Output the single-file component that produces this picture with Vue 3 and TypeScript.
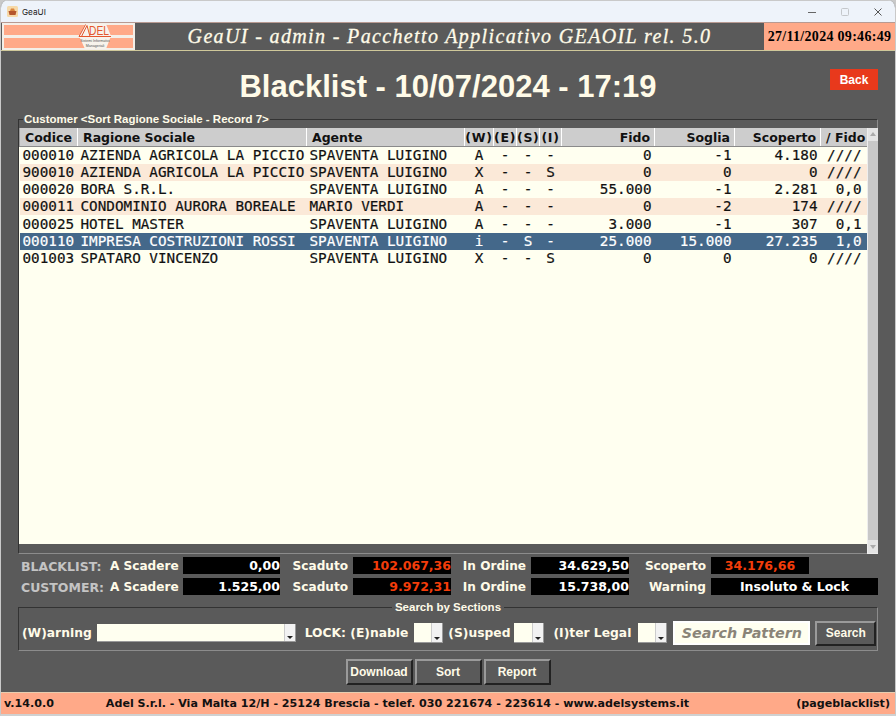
<script setup lang="ts">
interface Row {
  code: string;
  name: string;
  agent: string;
  w: string;
  e: string;
  s: string;
  i: string;
  fido: string;
  soglia: string;
  scoperto: string;
  ratio: string;
  selected?: boolean;
}

const rows: Row[] = [
  { code: '000010', name: 'AZIENDA AGRICOLA LA PICCIO', agent: 'SPAVENTA LUIGINO', w: 'A', e: '-', s: '-', i: '-', fido: '0', soglia: '-1', scoperto: '4.180', ratio: '////' },
  { code: '900010', name: 'AZIENDA AGRICOLA LA PICCIO', agent: 'SPAVENTA LUIGINO', w: 'X', e: '-', s: '-', i: 'S', fido: '0', soglia: '0', scoperto: '0', ratio: '////' },
  { code: '000020', name: 'BORA S.R.L.', agent: 'SPAVENTA LUIGINO', w: 'A', e: '-', s: '-', i: '-', fido: '55.000', soglia: '-1', scoperto: '2.281', ratio: '0,0' },
  { code: '000011', name: 'CONDOMINIO AURORA BOREALE', agent: 'MARIO VERDI', w: 'A', e: '-', s: '-', i: '-', fido: '0', soglia: '-2', scoperto: '174', ratio: '////' },
  { code: '000025', name: 'HOTEL MASTER', agent: 'SPAVENTA LUIGINO', w: 'A', e: '-', s: '-', i: '-', fido: '3.000', soglia: '-1', scoperto: '307', ratio: '0,1' },
  { code: '000110', name: 'IMPRESA COSTRUZIONI ROSSI', agent: 'SPAVENTA LUIGINO', w: 'i', e: '-', s: 'S', i: '-', fido: '25.000', soglia: '15.000', scoperto: '27.235', ratio: '1,0', selected: true },
  { code: '001003', name: 'SPATARO VINCENZO', agent: 'SPAVENTA LUIGINO', w: 'X', e: '-', s: '-', i: 'S', fido: '0', soglia: '0', scoperto: '0', ratio: '////' },
];
</script>

<template>
  <div class="window">
    <div class="titlebar">
      <svg class="app-icon" width="11" height="11" viewBox="0 0 11 11">
        <rect width="11" height="11" rx="1.5" fill="#f6d9a8" />
        <path d="M1.5 5h8l-1 4h-6z" fill="#b5562c" />
        <path d="M3 5l1-2.500h3L8 5z" fill="#d9863f" />
      </svg>
      <span class="app-name">GeaUI</span>
      <div class="win-controls">
        <svg width="12" height="12" viewBox="0 0 12 12"><path d="M2 6.500h8" stroke="#666" fill="none" /></svg>
        <svg width="12" height="12" viewBox="0 0 12 12"><rect x="2.500" y="2.500" width="7" height="7" rx="1" stroke="#c4c7cb" fill="none" /></svg>
        <svg width="12" height="12" viewBox="0 0 12 12"><path d="M2.500 2.500l7 7M9.500 2.500l-7 7" stroke="#555" fill="none" /></svg>
      </div>
    </div>

    <header class="topbar">
      <svg class="logo" width="133" height="27" viewBox="0 0 133 27">
        <rect width="133" height="27" fill="#f4efe8" />
        <rect x="2" y="2" width="129" height="10" fill="#ffa988" />
        <rect x="2" y="15" width="129" height="10" fill="#ffa988" />
        <path d="M77 13L83 1h21l5 12-5 13H83z" fill="#f7f3ec" />
        <path d="M77 13.500L83.500 1.500M79.500 13.500L85 2.500L88 13.500M77 13.500h32" stroke="#e4572e" stroke-width="1" fill="none" />
        <text x="87" y="12" textLength="20" lengthAdjust="spacingAndGlyphs" class="logo-word">DEL</text>
        <text x="93" y="18.500" text-anchor="middle" class="logo-small">Sistemi Informativi</text>
        <text x="93" y="24" text-anchor="middle" class="logo-small">Manageriali</text>
      </svg>
      <div class="app-title">GeaUI - admin - Pacchetto Applicativo GEAOIL rel. 5.0</div>
      <div class="clock">27/11/2024 09:46:49</div>
    </header>

    <main class="content">
      <div class="page-head">
        <h1>Blacklist - 10/07/2024 - 17:19</h1>
        <button class="back">Back</button>
      </div>

      <fieldset class="list-box">
        <legend>Customer &lt;Sort Ragione Sociale - Record 7&gt;</legend>
        <div class="list-inner">
          <div class="table-wrap">
            <table>
              <colgroup>
                <col style="width: 58px" />
                <col style="width: 229px" />
                <col style="width: 158px" />
                <col style="width: 29px" />
                <col style="width: 23px" />
                <col style="width: 23px" />
                <col style="width: 22px" />
                <col style="width: 93px" />
                <col style="width: 80px" />
                <col style="width: 86px" />
                <col style="width: 47px" />
              </colgroup>
              <thead>
                <tr>
                  <th>Codice</th>
                  <th>Ragione Sociale</th>
                  <th>Agente</th>
                  <th class="c">(W)</th>
                  <th class="c">(E)</th>
                  <th class="c">(S)</th>
                  <th class="c">(I)</th>
                  <th class="r">Fido</th>
                  <th class="r">Soglia</th>
                  <th class="r">Scoperto</th>
                  <th class="r">/ Fido</th>
                </tr>
              </thead>
              <tbody>
                <tr v-for="row in rows" :key="row.code" :class="{ selected: row.selected }">
                  <td>{{ row.code }}</td>
                  <td>{{ row.name }}</td>
                  <td>{{ row.agent }}</td>
                  <td class="c">{{ row.w }}</td>
                  <td class="c">{{ row.e }}</td>
                  <td class="c">{{ row.s }}</td>
                  <td class="c">{{ row.i }}</td>
                  <td class="r">{{ row.fido }}</td>
                  <td class="r">{{ row.soglia }}</td>
                  <td class="r">{{ row.scoperto }}</td>
                  <td class="r">{{ row.ratio }}</td>
                </tr>
              </tbody>
            </table>
          </div>
          <div class="scrollbar">
            <span class="up"></span>
            <span class="thumb"></span>
            <span class="down"></span>
          </div>
        </div>
      </fieldset>

      <div class="totals">
        <span class="group">BLACKLIST:</span>
        <span class="lbl first">A Scadere</span>
        <span class="val">0,00</span>
        <span class="lbl">Scaduto</span>
        <span class="val red">102.067,36</span>
        <span class="lbl">In Ordine</span>
        <span class="val">34.629,50</span>
        <span class="lbl">Scoperto</span>
        <span class="val red center">34.176,66</span>
        <span></span>

        <span class="group">CUSTOMER:</span>
        <span class="lbl first">A Scadere</span>
        <span class="val">1.525,00</span>
        <span class="lbl">Scaduto</span>
        <span class="val red">9.972,31</span>
        <span class="lbl">In Ordine</span>
        <span class="val">15.738,00</span>
        <span class="lbl">Warning</span>
        <span class="val center wide">Insoluto &amp; Lock</span>
      </div>

      <fieldset class="search-box">
        <legend>Search by Sections</legend>
        <div class="search-row">
          <span class="lbl">(W)arning</span>
          <span class="combo combo-w"><i></i></span>
          <span class="lbl lock">LOCK: (E)nable</span>
          <span class="combo combo-s"><i></i></span>
          <span class="lbl susp">(S)usped</span>
          <span class="combo combo-s wider"><i></i></span>
          <span class="lbl iter">(I)ter Legal</span>
          <span class="combo combo-s last"><i></i></span>
          <span class="pattern">Search Pattern</span>
          <button class="btn search">Search</button>
        </div>
      </fieldset>

      <div class="actions">
        <button class="btn">Download</button>
        <button class="btn">Sort</button>
        <button class="btn">Report</button>
      </div>
    </main>

    <footer class="status">
      <span>v.14.0.0</span>
      <span class="addr">Adel S.r.l. - Via Malta 12/H - 25124 Brescia - telef. 030 221674 - 223614 - www.adelsystems.it</span>
      <span>(pageblacklist)</span>
    </footer>
  </div>
</template>

<style scoped>
.window {
  width: 896px;
  height: 716px;
  box-sizing: border-box;
  display: flex;
  flex-direction: column;
  background: #5a5a5a;
  border: 1px solid #c9c9c9;
  border-top: none;
  border-bottom: 2px solid #d0d0d0;
  border-radius: 8px 8px 0 0;
  overflow: hidden;
  font-family: "DejaVu Sans", sans-serif;
}

.titlebar {
  height: 22px;
  flex: none;
  display: flex;
  align-items: center;
  background: #eef3fa;
  padding-left: 6px;
  border-top: 1px solid #c9c9c9;
  box-sizing: border-box;
}

.app-name {
  margin-left: 4px;
  font: 8.2px "Inter", sans-serif;
  color: #222;
}

.win-controls {
  margin-left: auto;
  display: flex;
  gap: 21px;
  padding-right: 11px;
}

.topbar {
  height: 29px;
  flex: none;
  display: flex;
  background: #5a5a5a;
  border-top: 1px solid #b89a92;
  border-bottom: 1px solid #cfc89a;
  box-sizing: border-box;
  padding-left: 1px;
}

.logo {
  flex: none;
}

.logo-word {
  font: 13px "Liberation Sans", sans-serif;
  fill: #e4572e;
}

.logo-small {
  font: 3.6px "Liberation Sans", sans-serif;
  fill: #555;
}

.app-title {
  flex: 1;
  text-align: center;
  padding-top: 2px;
  font: italic 20px "Liberation Serif", serif;
  letter-spacing: 1.36px;
  -webkit-text-stroke: 0.3px #fffbe8;
  color: #fffbe8;
  white-space: nowrap;
}

.clock {
  width: 131px;
  flex: none;
  background: #ffa988;
  color: #000;
  font: bold 14px "Liberation Serif", serif;
  letter-spacing: 0.3px;
  line-height: 27px;
  text-align: center;
  white-space: nowrap;
}

.content {
  flex: 1;
  display: flex;
  flex-direction: column;
  min-height: 0;
  padding: 0 17px 0 17px;
}

.page-head {
  position: relative;
  height: 61px;
  flex: none;
  display: flex;
  justify-content: center;
}

.page-head h1 {
  margin: 18px 0 0;
  font: bold 31px "Liberation Sans", sans-serif;
  line-height: 36px;
  color: #fffbe8;
}

.back {
  position: absolute;
  right: 0;
  top: 18px;
  width: 48px;
  height: 21px;
  padding: 0;
  border: none;
  background: #e8391c;
  color: #fff;
  font: bold 12px "Liberation Sans", sans-serif;
}

fieldset {
  margin: 0;
  min-width: 0;
  border: 1px solid;
  border-color: #333 #8c8c8c #8c8c8c #333;
}

legend {
  font: bold 11.5px "Liberation Sans", sans-serif;
  color: #fffbe8;
}

.list-box {
  height: 442px;
  flex: none;
  box-sizing: border-box;
  padding: 0;
}

.list-box legend {
  margin-left: 4px;
  padding: 0 1px 0 1px;
  line-height: 14px;
}

.list-inner {
  display: flex;
  align-items: flex-start;
  height: 425px;
  margin-top: 2px;
}

.table-wrap {
  width: 848px;
  height: 416px;
  flex: none;
  background: #fffff0;
}

table {
  width: 848px;
  table-layout: fixed;
  border-collapse: collapse;
}

th {
  height: 18px;
  padding: 2px 4px 0 5px;
  box-sizing: border-box;
  background: #cdcdcd;
  border-right: 1px solid #fff;
  border-left: 1px solid #9c9c9c;
  border-bottom: 1px solid #8a8a8a;
  font: bold 12.5px "DejaVu Sans", sans-serif;
  line-height: 15px;
  color: #111;
  text-align: left;
  white-space: nowrap;
  overflow: hidden;
}

th.c {
  padding: 2px 0 0;
  text-align: center;
  letter-spacing: 0.7px;
}

th.r {
  text-align: right;
}

td {
  height: 17.33px;
  padding: 0 0 0 3px;
  box-sizing: border-box;
  font: 14.3px "DejaVu Sans Mono", monospace;
  -webkit-text-stroke: 0.2px currentColor;
  line-height: 17px;
  color: #111;
  white-space: nowrap;
  overflow: hidden;
}

td.c {
  padding: 0;
  text-align: center;
}

td.r {
  padding: 0 3px 0 0;
  text-align: right;
}

td.r:last-child {
  padding-right: 6px;
}

tbody tr:nth-child(even) td {
  background: #fbe9d8;
}

tbody tr.selected td {
  background: #44688a;
  color: #fff;
}

.scrollbar {
  width: 10px;
  height: 425px;
  flex: none;
  display: flex;
  flex-direction: column;
  background: #c8c8c8;
  border-left: 1px solid #eee;
  border-bottom: 1px solid #eee;
}

.up,
.down {
  height: 13px;
  flex: none;
  background: #e4e4e4;
  position: relative;
}

.up::after,
.down::after {
  content: "";
  position: absolute;
  left: 2px;
  border-left: 3px solid transparent;
  border-right: 3px solid transparent;
}

.up::after {
  top: 4px;
  border-bottom: 4px solid #aaa;
}

.down::after {
  top: 5px;
  border-top: 4px solid #aaa;
}

.thumb {
  flex: 1;
  background: #c8c8c8;
}

.totals {
  display: grid;
  grid-template-columns: 89px 73px 97px 73px 98px 80px 98px 82px 98px 69px;
  grid-auto-rows: 17px;
  row-gap: 4px;
  flex: none;
  margin-top: 3px;
  padding-left: 3px;
  font: bold 12.1px "DejaVu Sans", sans-serif;
  line-height: 19px;
  color: #fffbe8;
}

.group {
  color: #c4c4c4;
  font-size: 12.5px;
}

.lbl {
  text-align: right;
  padding-right: 5px;
  white-space: nowrap;
}

.lbl.first {
  text-align: left;
  padding: 0;
}

.val {
  background: #000;
  color: #fff;
  font-size: 12.5px;
  line-height: 17px;
  text-align: right;
  white-space: nowrap;
}

.val.red {
  color: #f33d0a;
}

.val.center {
  text-align: center;
}

.val.wide {
  grid-column: span 2;
}

.search-box {
  height: 51px;
  flex: none;
  box-sizing: border-box;
  padding: 0;
  margin-top: 5px;
}

.search-box legend {
  margin: 0 auto;
  padding: 0 3px;
  line-height: 14px;
}

.search-row {
  display: flex;
  align-items: center;
  height: 36px;
  margin-top: 1px;
  padding-left: 3px;
  font: bold 12.3px "DejaVu Sans", sans-serif;
  color: #fffbe8;
}

.search-row .lbl {
  padding: 0;
}

.lock {
  margin-left: 9px;
}

.susp {
  margin-left: 5px;
}

.iter {
  margin-left: 9px;
}

.combo {
  position: relative;
  height: 18px;
  flex: none;
  margin-left: 5px;
  background: #fffff0;
  box-sizing: border-box;
  border-right: 1px solid #999;
  border-bottom: 1px solid #999;
}

.combo i {
  position: absolute;
  right: 0;
  top: 0;
  bottom: 0;
  width: 10px;
  background: #f2f2f2;
  border-left: 1px solid #ccc;
}

.combo i::after {
  content: "";
  position: absolute;
  left: 2px;
  bottom: 2px;
  border-left: 3px solid transparent;
  border-right: 3px solid transparent;
  border-top: 3px solid #222;
}

.combo-w {
  width: 199px;
}

.combo-s {
  width: 29px;
  height: 20px;
  margin-left: 6px;
}

.combo-s.wider {
  width: 30px;
  margin-left: 4px;
}

.combo-s.last {
  margin-left: 7px;
}

.pattern {
  width: 137px;
  height: 24px;
  flex: none;
  box-sizing: border-box;
  margin-left: 6px;
  background: #fffff0;
  border: 2px solid #fff;
  text-align: center;
  font: italic bold 14.3px "DejaVu Sans", sans-serif;
  line-height: 20px;
  color: #8a8478;
  white-space: nowrap;
}

.btn {
  height: 26px;
  padding: 0;
  box-sizing: border-box;
  background: #5a5a5a;
  border: 2px solid;
  border-color: #9a9a9a #222 #222 #9a9a9a;
  color: #fffbe8;
  font: bold 12px "Liberation Sans", sans-serif;
}

.search {
  width: 61px;
  height: 25px;
  flex: none;
  margin-left: 5px;
}

.actions {
  display: flex;
  justify-content: center;
  gap: 2px;
  flex: none;
  margin-top: 8px;
}

.actions .btn {
  width: 67px;
}

.status {
  height: 22px;
  flex: none;
  margin-top: auto;
  display: flex;
  align-items: center;
  background: #ffa988;
  border-top: 1px solid #e8cdb0;
  box-sizing: border-box;
  padding: 0 5px 0 3px;
  font: bold 11.1px "DejaVu Sans", sans-serif;
  color: #111;
  white-space: nowrap;
}

.addr {
  margin-left: 52px;
  margin-right: auto;
}
</style>

<style>
html, body {
  margin: 0;
  background: #c9c9c9;
}
</style>
